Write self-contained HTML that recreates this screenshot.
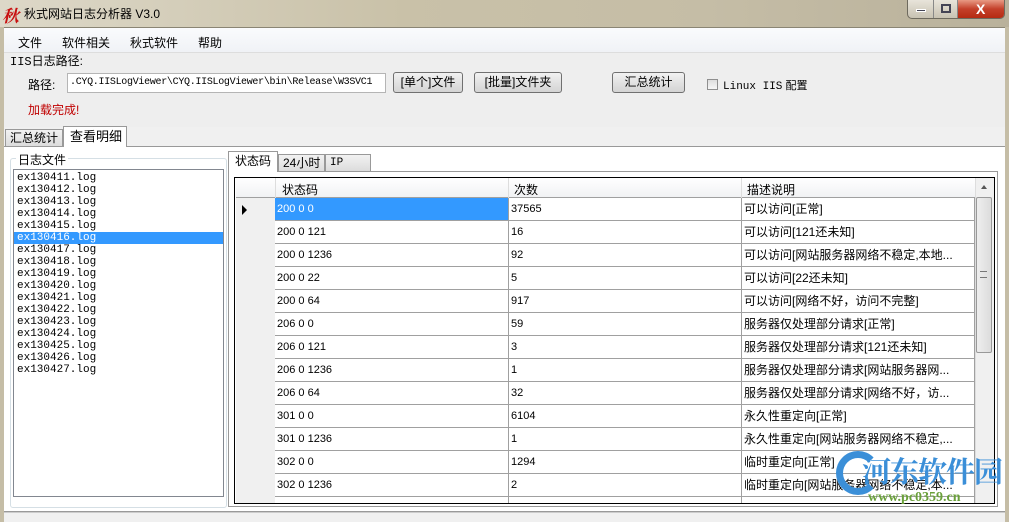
<!DOCTYPE html>
<html><head><meta charset="utf-8"><style>
*{box-sizing:border-box;margin:0;padding:0}
body{width:1009px;height:522px;overflow:hidden;background:#f0f0f0;position:relative;font-family:"Liberation Sans","Noto Sans CJK SC",sans-serif;font-size:12px;color:#000}
.a{position:absolute}
.m{font-family:"Liberation Mono","Noto Sans CJK SC",monospace}
.btn{position:absolute;height:21px;border:1px solid #707070;border-radius:3px;background:linear-gradient(#f2f2f2,#e2e2e2 50%,#d4d4d4);text-align:center;line-height:19px;font-size:12px}
.tab{position:absolute;border:1px solid #999;border-bottom:none;background:linear-gradient(#f2f2f2,#dcdcdc);line-height:17px;padding-left:4px;font-size:12px}
.row{position:absolute;left:1px;width:739px;height:23px;border-bottom:1px solid #a0a0a0;background:#fff}
.row div{position:absolute;top:0;height:22px;line-height:22px;padding-left:2px;border-right:1px solid #a0a0a0;white-space:nowrap;overflow:hidden;font-size:11px}
</style></head><body>
<div class="a" style="left:0;top:0;width:1009px;height:27px;background:linear-gradient(90deg,#ddd8c8,#c9c1a8 40%,#c5bda6 70%,#b9b19b)"></div>
<div class="a" style="left:2px;top:2px;color:#c81010;font-size:17px;font-weight:bold;font-style:italic;font-family:'Noto Serif CJK SC',serif">秋</div>
<div class="a" style="left:24px;top:5px;font-size:12px">秋式网站日志分析器 V3.0</div>
<div class="a" style="left:907px;top:0;width:98px;height:19px;border:1px solid #6e6a5e;border-top:none;border-radius:0 0 5px 5px;background:linear-gradient(#e8e4da,#c8c2b2);overflow:hidden">
 <div class="a" style="left:0;top:0;width:26px;height:18px;border-right:1px solid #888"></div>
 <div class="a" style="left:8px;top:9px;width:10px;height:3px;background:#445;border:1px solid #fff"></div>
 <div class="a" style="left:26px;top:0;width:24px;height:18px;border-right:1px solid #888"></div>
 <div class="a" style="left:33px;top:4px;width:10px;height:9px;border:2px solid #445"></div>
 <div class="a" style="left:50px;top:0;width:48px;height:18px;background:linear-gradient(#e89a84,#c4402a 50%,#b52a12)"></div>
 <div class="a" style="left:68px;top:1px;color:#fff;font-weight:bold;font-size:14px">X</div>
</div>
<div class="a" style="left:0;top:27px;width:4px;height:495px;background:#c5bda6"></div>
<div class="a" style="left:1005px;top:27px;width:4px;height:495px;background:#c5bda6"></div>
<div class="a" style="left:4px;top:27px;width:1001px;height:1px;background:#8a8574"></div>
<div class="a" style="left:4px;top:28px;width:1001px;height:24px;background:linear-gradient(#fafbfd,#f0f2f6)"></div>
<div class="a" style="left:18px;top:34px">文件</div>
<div class="a" style="left:62px;top:34px">软件相关</div>
<div class="a" style="left:130px;top:34px">秋式软件</div>
<div class="a" style="left:198px;top:34px">帮助</div>
<div class="a" style="left:4px;top:52px;width:1001px;height:75px;background:#eeeeee;border-top:1px solid #ddd"></div>
<div class="a" style="left:10px;top:52px;font-size:12px"><span class="m">IIS</span>日志路径:</div>
<div class="a" style="left:28px;top:76px">路径:</div>
<div class="a m" style="left:67px;top:73px;width:319px;height:20px;background:#fff;border:1px solid #b5b5b5;font-size:10px;letter-spacing:-0.3px;line-height:18px;padding-left:2px;white-space:nowrap;overflow:hidden">.CYQ.IISLogViewer\CYQ.IISLogViewer\bin\Release\W3SVC1</div>
<div class="btn" style="left:393px;top:72px;width:70px">[单个]文件</div>
<div class="btn" style="left:474px;top:72px;width:88px">[批量]文件夹</div>
<div class="btn" style="left:612px;top:72px;width:73px">汇总统计</div>
<div class="a" style="left:707px;top:79px;width:11px;height:11px;border:1px solid #8f8f8f;background:linear-gradient(#ddd,#f6f6f6)"></div>
<div class="a" style="left:723px;top:77px;font-size:11px"><span class="m">Linux IIS</span> 配置</div>
<div class="a" style="left:28px;top:101px;color:#c00000">加载完成!</div>
<div class="a" style="left:4px;top:146px;width:1001px;height:1px;background:#999"></div>
<div class="tab" style="left:5px;top:129px;width:58px;height:17px">汇总统计</div>
<div class="a" style="left:63px;top:126px;width:64px;height:21px;background:#fff;border:1px solid #999;border-bottom:none;padding-left:6px;line-height:19px;font-size:13px">查看明细</div>
<div class="a" style="left:4px;top:147px;width:1001px;height:365px;background:#fff;border-bottom:1px solid #999"></div>
<div class="a" style="left:4px;top:512px;width:1001px;height:10px;background:#f0f0f0;border-top:1px solid #ccc"></div>
<div class="a" style="left:10px;top:158px;width:217px;height:350px;border:1px solid #d5dfe5;border-radius:3px"></div>
<div class="a" style="left:16px;top:151px;background:#fff;padding:0 2px;font-size:12px">日志文件</div>
<div class="a m" style="left:13px;top:169px;width:211px;height:328px;border:1px solid #828790;background:#fff;font-size:11px;line-height:12px;padding-top:2px">
<div style="padding-left:3px">ex130411.log</div><div style="padding-left:3px">ex130412.log</div><div style="padding-left:3px">ex130413.log</div><div style="padding-left:3px">ex130414.log</div><div style="padding-left:3px">ex130415.log</div>
<div style="padding-left:3px;background:#3399ff;color:#fff">ex130416.log</div>
<div style="padding-left:3px">ex130417.log</div><div style="padding-left:3px">ex130418.log</div><div style="padding-left:3px">ex130419.log</div><div style="padding-left:3px">ex130420.log</div><div style="padding-left:3px">ex130421.log</div><div style="padding-left:3px">ex130422.log</div><div style="padding-left:3px">ex130423.log</div><div style="padding-left:3px">ex130424.log</div><div style="padding-left:3px">ex130425.log</div><div style="padding-left:3px">ex130426.log</div><div style="padding-left:3px">ex130427.log</div>
</div>
<div class="a" style="left:228px;top:171px;width:770px;height:336px;border:1px solid #999;background:#fff"></div>
<div class="a" style="left:228px;top:151px;width:50px;height:21px;background:#fff;border:1px solid #999;border-bottom:none;padding-left:6px;line-height:19px">状态码</div>
<div class="tab" style="left:278px;top:154px;width:47px;height:17px">24小时</div>
<div class="tab m" style="left:325px;top:154px;width:46px;height:17px;font-size:11px">IP</div>
<div class="a" style="left:234px;top:177px;width:761px;height:327px;border:1px solid #000;background:#fff;overflow:hidden">
 <div class="a" style="left:1px;top:0;width:739px;height:20px;background:linear-gradient(#fff,#f1f2f4);border-bottom:1px solid #a0a0a0"></div>
 <div class="a" style="left:40px;top:0;width:1px;height:20px;background:#ddd"></div>
 <div class="a" style="left:47px;top:3px">状态码</div>
 <div class="a" style="left:273px;top:0;width:1px;height:20px;background:#ddd"></div>
 <div class="a" style="left:279px;top:3px">次数</div>
 <div class="a" style="left:506px;top:0;width:1px;height:20px;background:#ddd"></div>
 <div class="a" style="left:512px;top:3px">描述说明</div>
 <div id="rows"></div>
 <div class="a" style="left:1px;top:20px;width:39px;height:310px;background:#f0f0f0"></div>
 <div class="a" style="left:7px;top:27px;width:0;height:0;border-left:5px solid #000;border-top:5px solid transparent;border-bottom:5px solid transparent"></div>
 <div class="a" style="left:740px;top:0;width:19px;height:330px;background:#f0f0f0;border-left:1px solid #ddd"></div>
 <div class="a" style="left:746px;top:7px;border-bottom:4px solid #555;border-left:3px solid transparent;border-right:3px solid transparent"></div>
 <div class="a" style="left:741px;top:19px;width:16px;height:156px;border:1px solid #999;border-radius:2px;background:linear-gradient(90deg,#eee,#dcdcdc)"></div>
 <div class="a" style="left:745px;top:93px;width:7px;height:7px;border-top:1px solid #777;border-bottom:1px solid #777"></div>
</div>
<div class="a" style="left:836px;top:451px;width:44px;height:44px;border-radius:50%;border:7px solid #3b8fd8;border-right-color:transparent"></div>
<div class="a" style="left:862px;top:450px;color:#3b8fd8;font-size:29px;font-weight:bold;font-family:'Noto Serif CJK SC',serif;letter-spacing:-1px">河东软件园</div>
<div class="a" style="left:868px;top:490px;color:#6aa03a;font-size:14px;font-weight:bold;font-family:'Liberation Serif',serif">www.pc0359.cn</div>
<script>
var d=[["200 0 0","37565","可以访问[正常]"],["200 0 121","16","可以访问[121还未知]"],["200 0 1236","92","可以访问[网站服务器网络不稳定,本地..."],["200 0 22","5","可以访问[22还未知]"],["200 0 64","917","可以访问[网络不好，访问不完整]"],["206 0 0","59","服务器仅处理部分请求[正常]"],["206 0 121","3","服务器仅处理部分请求[121还未知]"],["206 0 1236","1","服务器仅处理部分请求[网站服务器网..."],["206 0 64","32","服务器仅处理部分请求[网络不好，访..."],["301 0 0","6104","永久性重定向[正常]"],["301 0 1236","1","永久性重定向[网站服务器网络不稳定,..."],["302 0 0","1294","临时重定向[正常]"],["302 0 1236","2","临时重定向[网站服务器网络不稳定,本..."],["","",""]];
var h="";d.forEach(function(r,i){var t=20+i*23;h+='<div class="row" style="top:'+t+'px"><div style="left:39px;width:234px;'+(i==0?'background:#3399ff;color:#fff':'')+'">'+r[0]+'</div><div style="left:273px;width:233px">'+r[1]+'</div><div style="left:506px;width:233px;font-size:12px">'+r[2]+'</div></div>'});
document.getElementById("rows").innerHTML=h;
</script>
</body></html>
